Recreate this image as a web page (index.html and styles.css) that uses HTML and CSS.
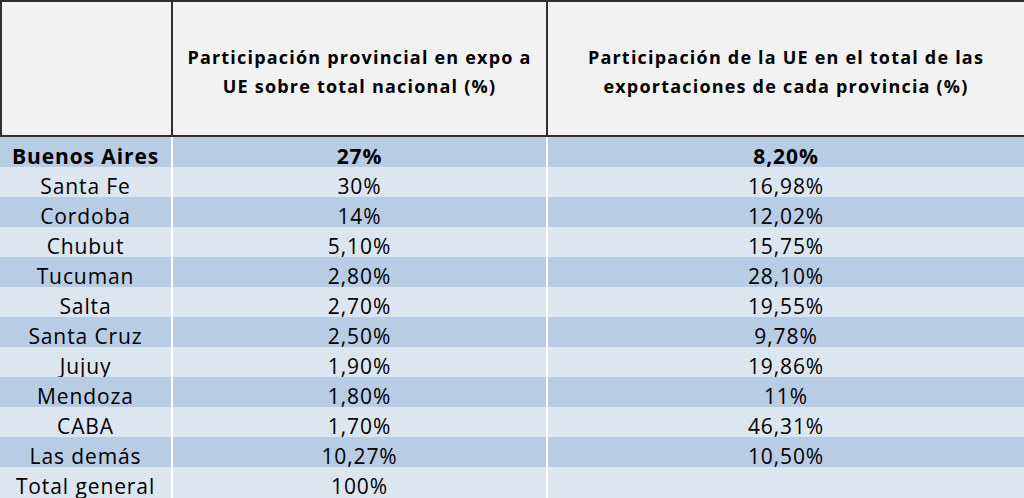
FILE: index.html
```html
<!DOCTYPE html>
<html lang="es">
<head>
<meta charset="utf-8">
<title>Participación UE</title>
<link rel="stylesheet" href="styles.css">
</head>
<body>
<div class="sheet">
  <div class="head">
    <div class="hcell"></div>
    <div class="hcell">Participación provincial en expo a<br>UE sobre total nacional (%)</div>
    <div class="hcell">Participación de la UE en el total de las<br>exportaciones de cada provincia (%)</div>
  </div>
  <div class="body">
    <div class="row dark bold"><div>Buenos Aires</div><div>27%</div><div>8,20%</div></div>
    <div class="row light"><div>Santa Fe</div><div>30%</div><div>16,98%</div></div>
    <div class="row dark"><div>Cordoba</div><div>14%</div><div>12,02%</div></div>
    <div class="row light"><div>Chubut</div><div>5,10%</div><div>15,75%</div></div>
    <div class="row dark"><div>Tucuman</div><div>2,80%</div><div>28,10%</div></div>
    <div class="row light"><div>Salta</div><div>2,70%</div><div>19,55%</div></div>
    <div class="row dark"><div>Santa Cruz</div><div>2,50%</div><div>9,78%</div></div>
    <div class="row light"><div>Jujuy</div><div>1,90%</div><div>19,86%</div></div>
    <div class="row dark"><div>Mendoza</div><div>1,80%</div><div>11%</div></div>
    <div class="row light"><div>CABA</div><div>1,70%</div><div>46,31%</div></div>
    <div class="row dark"><div>Las demás</div><div>10,27%</div><div>10,50%</div></div>
    <div class="row light last"><div>Total general</div><div>100%</div><div></div></div>
  </div>
</div>
</body>
</html>
```
FILE: styles.css
```css
html, body {
  margin: 0;
  padding: 0;
  background: #ffffff;
}
body {
  font-family: "Open Sans", "Noto Sans", sans-serif;
  color: #000;
  width: 1024px;
  height: 498px;
  overflow: hidden;
}
.sheet {
  display: flex;
  flex-direction: column;
}
.head {
  display: grid;
  grid-template-columns: 169px 373px 1fr;
  column-gap: 2px;
  background: #303030;
  padding: 2px 0 2px 2px;
  height: 133px;
}
.hcell {
  background: #f2f2f2;
  display: flex;
  align-items: center;
  justify-content: center;
  text-align: center;
  font-weight: 700;
  font-size: 18px;
  letter-spacing: 1.2px;
  line-height: 29px;
  padding-top: 6px;
  white-space: nowrap;
}
.body {
  display: flex;
  flex-direction: column;
  gap: 2px;
}
.row {
  display: grid;
  grid-template-columns: 171px 373px 1fr;
  column-gap: 2px;
  height: 28px;
  font-size: 21px;
  letter-spacing: 0.9px;
  line-height: 28px;
}
.row > div {
  display: flex;
  align-items: center;
  justify-content: center;
  padding-top: 5px;
  white-space: nowrap;
}
.row.last { height: 31px; }
.dark > div { background: #b8cce4; }
.light > div { background: #dce6f1; }
.bold { font-weight: 700; }
```
